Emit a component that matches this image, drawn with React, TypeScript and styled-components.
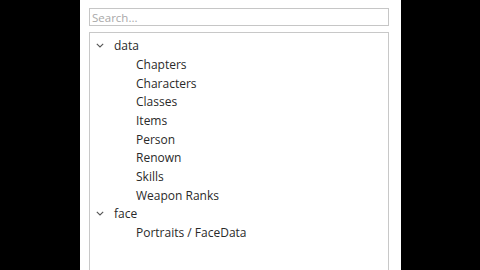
import styled, { createGlobalStyle } from 'styled-components'

const GlobalStyle = createGlobalStyle`
  html, body {
    margin: 0;
    padding: 0;
    background: #000;
    height: 270px;
    overflow: hidden;
  }
  body {
    font-family: "Open Sans", "Noto Sans", sans-serif;
  }
`

type Node = { label: string; children?: string[] }

const tree: Node[] = [
  {
    label: 'data',
    children: ['Chapters', 'Characters', 'Classes', 'Items', 'Person', 'Renown', 'Skills', 'Weapon Ranks'],
  },
  { label: 'face', children: ['Portraits / FaceData'] },
]

function Chevron() {
  return (
    <ChevronBox>
      <svg width="8" height="5" viewBox="0 0 8 5">
        <path d="M0.8 0.8 L4 4 L7.2 0.8" fill="none" stroke="#555" strokeWidth="1.1" />
      </svg>
    </ChevronBox>
  )
}

export default function App() {
  return (
    <>
      <GlobalStyle />
      <Page>
        <Panel>
          <Search placeholder="Search..." />
          <TreeView>
            {tree.map((n) => (
              <div key={n.label}>
                <Row>
                  <Chevron />
                  <Label>{n.label}</Label>
                </Row>
                {n.children?.map((c) => (
                  <Row key={c} $child>
                    <Label>{c}</Label>
                  </Row>
                ))}
              </div>
            ))}
          </TreeView>
        </Panel>
      </Page>
    </>
  )
}

const Page = styled.div`
  display: flex;
  height: 270px;
  background: #000;
`

const Panel = styled.div`
  margin-left: 80px;
  width: 321px;
  box-sizing: border-box;
  padding: 8px 12px 0 9px;
  background: #fff;
  display: flex;
  flex-direction: column;
  gap: 6px;
`

const Search = styled.input`
  box-sizing: border-box;
  width: 300px;
  height: 20px;
  margin: 0;
  border: 1px solid #c6c6c6;
  padding: 0 2px;
  font-family: "Open Sans", "Noto Sans", sans-serif;
  font-size: 11.5px;
  outline: none;
  &::placeholder {
    color: #a8a8a8;
  }
`

const TreeView = styled.div`
  box-sizing: border-box;
  width: 300px;
  height: 260px;
  border: 1px solid #c8c8c8;
  border-bottom: none;
  padding-top: 3px;
`

const Row = styled.div<{ $child?: boolean }>`
  display: flex;
  align-items: center;
  height: 18.7px;
  padding-left: ${(p) => (p.$child ? '46px' : '5px')};
`

const ChevronBox = styled.span`
  display: flex;
  align-items: center;
  justify-content: center;
  width: 10px;
  margin-right: 9px;
`

const Label = styled.span`
  font-size: 12px;
  color: #2a2a2a;
  white-space: nowrap;
`
